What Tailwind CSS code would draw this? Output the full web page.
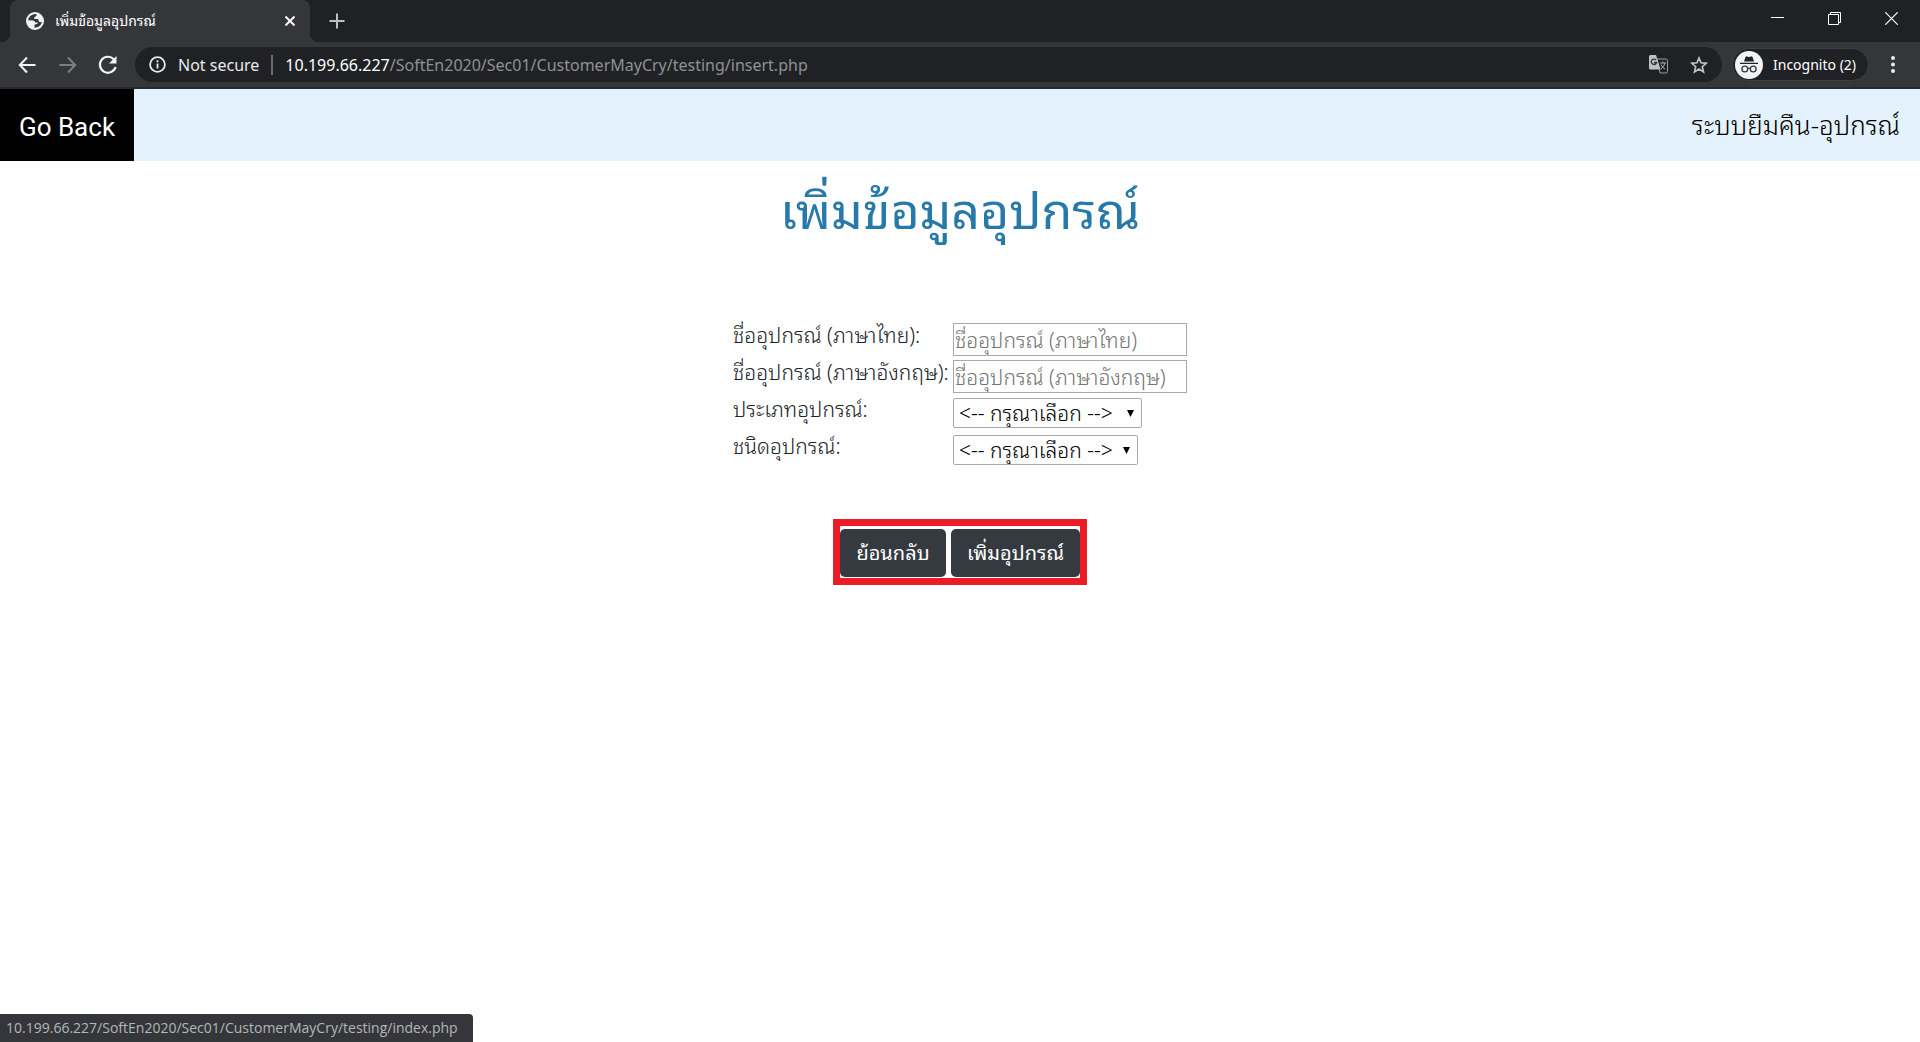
<!DOCTYPE html>
<html lang="th">
<head>
<meta charset="utf-8">
<meta name="viewport" content="width=device-width, initial-scale=1">
<title>เพิ่มข้อมูลอุปกรณ์</title>
<script src="https://cdn.jsdelivr.net/npm/@tailwindcss/browser@4"></script>
</head>
<body class="flex min-h-screen flex-col bg-white font-['Noto_Sans','Noto_Sans_Thai_Looped','Loma',sans-serif] text-[#212529]">

<!-- Tab strip -->
<div class="flex h-[42px] shrink-0 bg-[#202124] text-white">
  <div class="flex w-2.5 items-end bg-[#35363a]"><span class="h-full w-full rounded-br-lg bg-[#202124]"></span></div>
  <div class="flex w-[300px] items-center rounded-t-lg bg-[#35363a] pr-3 pl-4">
    <svg class="size-[18px]" viewBox="0 0 18 18"><circle cx="9" cy="9" r="9" fill="#f1f3f4"/><path d="M8 2.3C5 3 2.500 5 2.100 8.200L7 8.500q2 .2 2.300 2H12q-.2 1.500-2 1.800l-1.500.5V15.700Q15 15.500 16 9.500 14 11 12.800 9.200L12 7H8.300V5Q10.500 5 10.500 3.200L10.800 2.300Q9 1.900 8 2.300Z" fill="#35363a"/></svg>
    <span class="ml-[11px] flex-1 text-sm whitespace-nowrap">เพิ่มข้อมูลอุปกรณ์</span>
    <button aria-label="Close tab" class="flex size-4 items-center justify-center"><svg class="size-2.5" viewBox="0 0 10 10" stroke="#fff" stroke-width="2"><path d="M.5.5l9 9M9.500.5l-9 9"/></svg></button>
  </div>
  <div class="w-2.5 bg-[#35363a]"><span class="block h-full w-full rounded-bl-lg bg-[#202124]"></span></div>
  <button aria-label="New tab" class="ml-[7px] flex w-5 items-center justify-center"><svg class="size-4" viewBox="0 0 16 16" stroke="#bdc1c6" stroke-width="2"><path d="M8 .5v15M.5 8h15"/></svg></button>
  <div class="ml-auto flex h-9 items-center gap-11 pr-[22px]">
    <button aria-label="Minimize"><svg class="size-[13px]" viewBox="0 0 13 13" stroke="#fff"><path d="M0 5.500h13"/></svg></button>
    <button aria-label="Restore"><svg class="size-[13px]" viewBox="0 0 13 13" fill="none" stroke="#fff"><path d="M.5 2.500h10v10H.5zM2.500 2.500v-2h10v10h-2"/></svg></button>
    <button aria-label="Close"><svg class="size-[13px]" viewBox="0 0 13 13" stroke="#fff" stroke-width="1.200"><path d="M.3.3l12.400 12.400M12.700.3L.3 12.700"/></svg></button>
  </div>
</div>

<!-- Toolbar -->
<div class="flex h-[47px] shrink-0 items-center border-b-2 border-[#28292c] bg-[#35363a] pr-[25px] pl-[18px] font-['Noto_Sans',sans-serif] text-white">
  <button aria-label="Back" class="mr-[23px]"><svg class="size-[18px]" viewBox="0 0 18 18" fill="none" stroke="#f1f3f4" stroke-width="2"><path d="M17.500 9H2M9 1.500L1.800 9 9 16.500"/></svg></button>
  <button aria-label="Forward" class="mr-[21px]"><svg class="size-[18px]" viewBox="0 0 18 18" fill="none" stroke="#7d7e80" stroke-width="2"><path d="M.5 9H16M9 1.500L16.200 9 9 16.500"/></svg></button>
  <button aria-label="Reload" class="mr-[17px]"><svg class="size-5" viewBox="0 0 20 20"><path d="M15.800 4.300A8 8 0 1 0 17.600 12" fill="none" stroke="#f1f3f4" stroke-width="2.200"/><path d="M18.500 1v7.500H11z" fill="#f1f3f4"/></svg></button>
  <div class="flex h-[35px] flex-1 items-center rounded-full bg-[#202124] pr-3.5 pl-3.5 text-base">
    <svg class="size-[17px]" viewBox="0 0 17 17"><circle cx="8.500" cy="8.500" r="7.400" fill="none" stroke="#e8eaed" stroke-width="1.800"/><path d="M7.600 7.500h1.800v5H7.600zM7.600 4.300h1.800v1.900H7.600z" fill="#e8eaed"/></svg>
    <span class="ml-3 text-[#e8eaed]">Not secure</span>
    <span class="mx-3 h-5 w-0.5 bg-[#6b6c6f]"></span>
    <span class="flex-1 text-[#8f9194]"><span class="text-white">10.199.66.227</span>/SoftEn2020/Sec01/CustomerMayCry/testing/insert.php</span>
    <svg class="size-[19px]" viewBox="0 0 19 19"><path d="M8 4h9q1.500 0 1.500 1.500v11q0 1.500-1.500 1.500h-6z" fill="none" stroke="#9a9b9e"/><path d="M1.500 0H7l4.500 14.500H1.500Q0 14.500 0 13V1.500Q0 0 1.500 0Z" fill="#bdc1c6"/><path d="M7 5A2.700 2.700 0 1 0 7.600 7.500H5" fill="none" stroke="#35363a" stroke-width="1.400"/><path d="M11 8h6M13.800 6.500V8M16 8q-1 4-4 6M12 9.500q1 3 4 4.500" fill="none" stroke="#aaacae"/></svg>
    <svg class="ml-[22px] size-[18px]" viewBox="0 0 18 18" fill="none" stroke="#bdc1c6" stroke-width="1.700"><path d="M9 2l2 4.800 5.200.5-3.900 3.400 1.200 5.200L9 13.100l-4.500 2.800 1.200-5.200L1.800 7.300 7 6.800z"/></svg>
  </div>
  <button class="ml-2.5 flex h-[33px] w-[137px] items-center rounded-full border border-[#3f4043] bg-[#202124] pl-0.5 text-sm whitespace-nowrap">
    <svg class="mr-2.5 size-7" viewBox="0 0 28 28"><circle cx="14" cy="14" r="14" fill="#f1f3f4"/><path d="M9 10.500l1.500-4.500q.3-.8 1.200-.6l2.300.5 2.300-.5q.9-.2 1.200.6L19 10.500zM5 11.700h18v1.300H5z" fill="#202124"/><g fill="none" stroke="#35363a" stroke-width="1.300"><circle cx="9.800" cy="18" r="2.900"/><circle cx="18.200" cy="18" r="2.900"/><path d="M12.700 17.500q1.300-.8 2.600 0"/></g></svg>
    Incognito (2)
  </button>
  <button aria-label="Menu" class="ml-[22px]"><svg class="h-[17px] w-1" viewBox="0 0 4 17" fill="#e8eaed"><circle cx="2" cy="2" r="2"/><circle cx="2" cy="8.500" r="2"/><circle cx="2" cy="15" r="2"/></svg></button>
</div>

<!-- Site header -->
<header class="flex h-[72px] shrink-0 items-center justify-between bg-[#e3f2fd] pr-5 text-[26px] font-light">
  <a href="index.php" class="flex h-full w-[134px] items-center justify-center bg-black pt-1 font-['Roboto',sans-serif] font-normal whitespace-nowrap text-white">Go Back</a>
  <span class="text-black">ระบบยืมคืน-อุปกรณ์</span>
</header>

<main class="flex flex-1 flex-col items-center">
  <h1 class="mt-3 h-[75px] text-[50px] leading-[75px] whitespace-nowrap text-[#2679a8]">เพิ่มข้อมูลอุปกรณ์</h1>
  <form class="mt-[75px] flex flex-col items-center">
    <div class="grid grid-cols-[220px_234px] gap-y-1 text-[21px] leading-6 font-light">
      <label for="th" class="h-[33px] whitespace-nowrap">ชื่ออุปกรณ์ (ภาษาไทย):</label>
      <input id="th" class="h-[33px] w-full border border-[#a9a9a9] px-px placeholder:text-[#757575]" placeholder="ชื่ออุปกรณ์ (ภาษาไทย)">
      <label for="en" class="h-[33px] whitespace-nowrap">ชื่ออุปกรณ์ (ภาษาอังกฤษ):</label>
      <input id="en" class="h-[33px] w-full border border-[#a9a9a9] px-px placeholder:text-[#757575]" placeholder="ชื่ออุปกรณ์ (ภาษาอังกฤษ)">
      <label for="cat" class="h-[33px]">ประเภทอุปกรณ์:</label>
      <div class="relative mt-px w-[189px]"><select id="cat" class="h-[30px] w-full appearance-none rounded-xs border border-[#a9a9a9] bg-white pl-[5px] leading-7 text-black"><option>&lt;-- กรุณาเลือก --&gt;</option></select><svg class="pointer-events-none absolute top-3 right-2 h-[7px] w-[7px]" viewBox="0 0 7 7"><path d="M0 0h7L3.500 7z"/></svg></div>
      <label for="kind" class="h-[33px]">ชนิดอุปกรณ์:</label>
      <div class="relative mt-px w-[185px]"><select id="kind" class="h-[30px] w-full appearance-none rounded-xs border border-[#a9a9a9] bg-white pl-[5px] leading-7 text-black"><option>&lt;-- กรุณาเลือก --&gt;</option></select><svg class="pointer-events-none absolute top-3 right-2 h-[7px] w-[7px]" viewBox="0 0 7 7"><path d="M0 0h7L3.500 7z"/></svg></div>
    </div>
    <div class="mt-[52px] flex h-[66px] items-center gap-[5px] border-7 border-[#ed1c24] pt-0.5 text-xl text-white">
      <button type="button" class="h-12 w-[106px] rounded-[5px] bg-[#343a40] whitespace-nowrap">ย้อนกลับ</button>
      <button type="submit" class="h-12 w-[129px] rounded-[5px] bg-[#343a40] whitespace-nowrap">เพิ่มอุปกรณ์</button>
    </div>
  </form>
</main>

<footer class="flex h-7 w-[473px] items-center rounded-tr-sm bg-[#35363a] pl-1.5 font-['Open_Sans',sans-serif] text-sm text-[#b4b6b9]">10.199.66.227/SoftEn2020/Sec01/CustomerMayCry/testing/index.php</footer>
</body>
</html>
